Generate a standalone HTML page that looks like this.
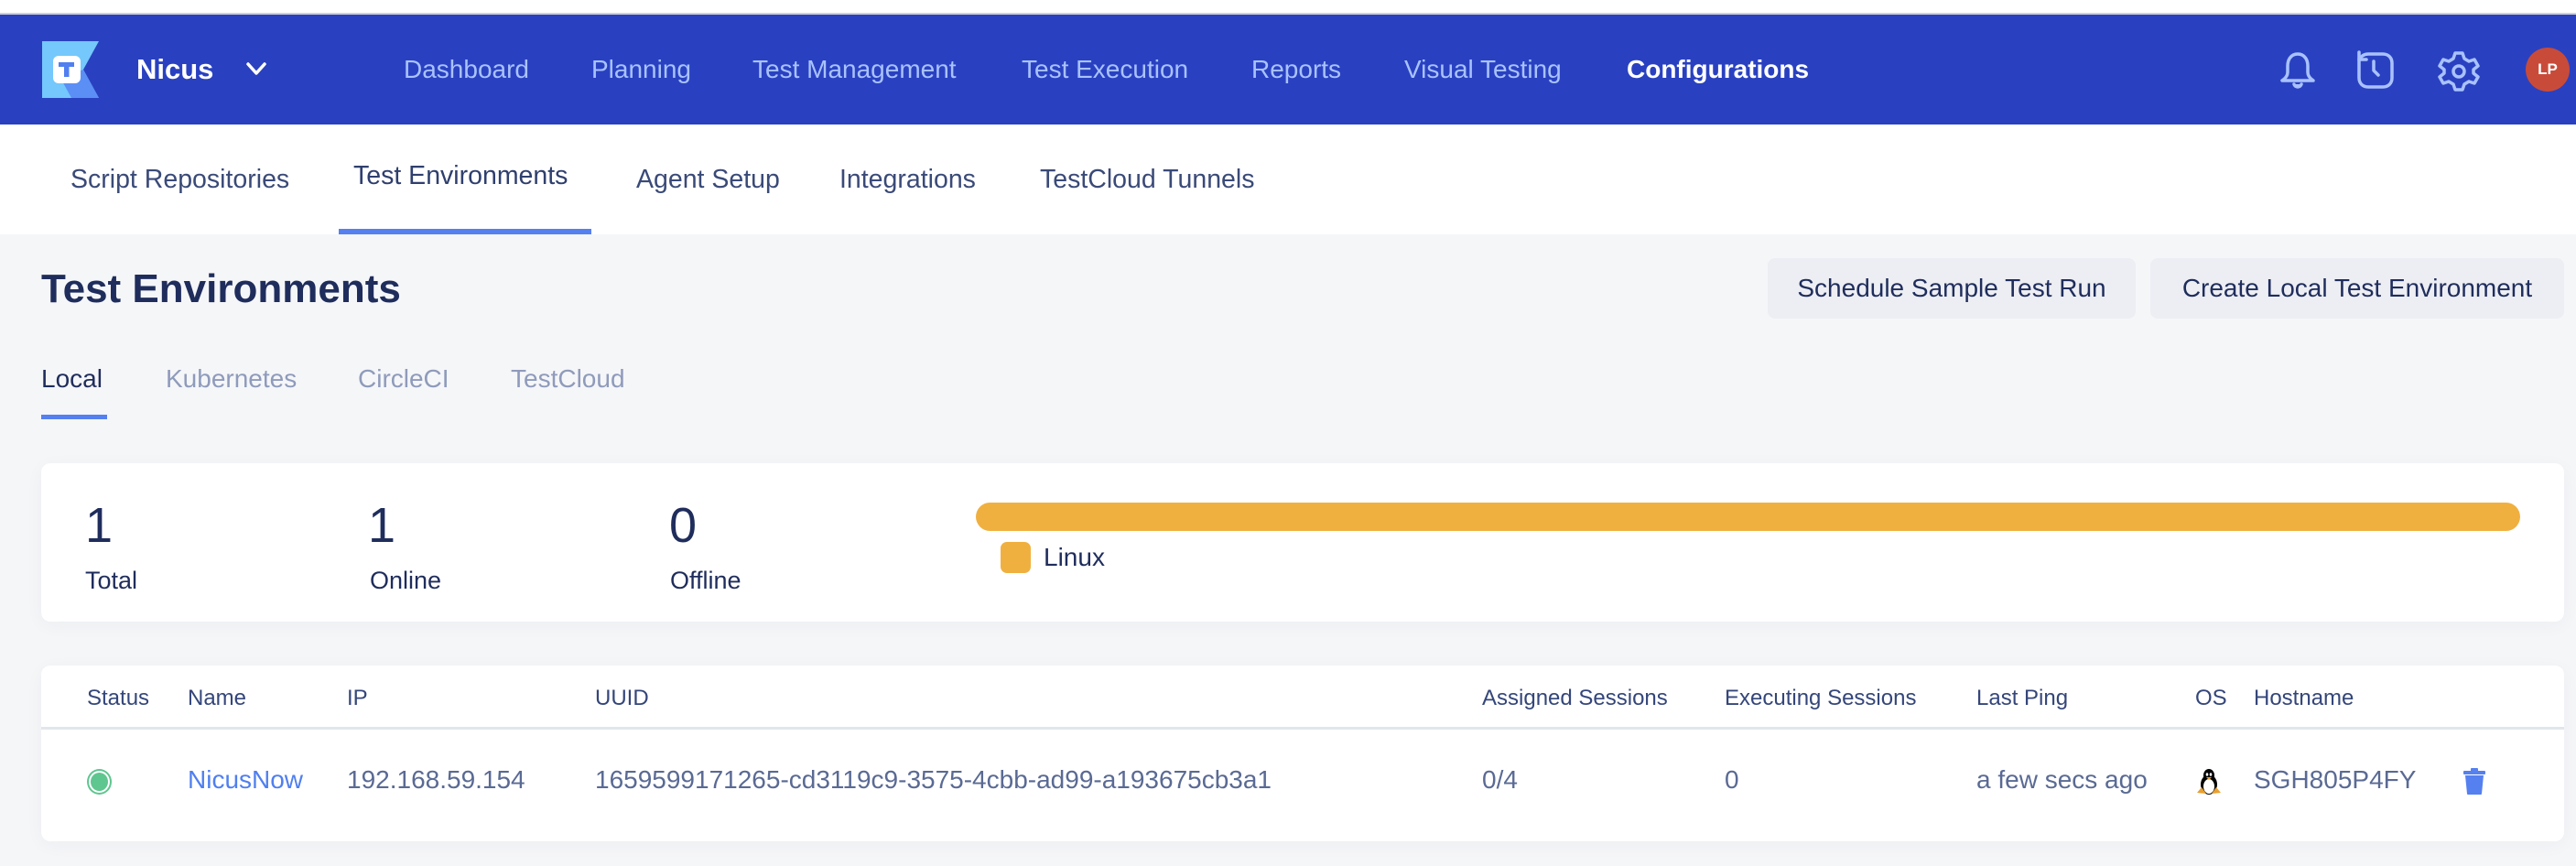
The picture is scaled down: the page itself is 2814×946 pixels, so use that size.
<!DOCTYPE html>
<html><head><meta charset="utf-8">
<style>
*{margin:0;padding:0;box-sizing:border-box}
body{width:2814px;height:946px;background:#f5f6f8;font-family:"Liberation Sans",sans-serif;position:relative;overflow:hidden;color:#1f2d5c}
.a{position:absolute;white-space:nowrap}
.top{left:0;top:0;width:2814px;height:14px;background:#fff}
.line{left:0;top:14px;width:2814px;height:2px;background:#d0d0d4}
.nav{left:0;top:16px;width:2814px;height:120px;background:#2941c0}
.nl{color:#a9c2ff;font-size:28px;top:60px}
.sub{left:0;top:136px;width:2814px;height:120px;background:#fff}
.st{font-size:28.5px;color:#3a4a78;top:180px}
.btn{background:#edeef3;border-radius:8px;height:66px;top:282px;font-size:28px;color:#1f2d5c;display:flex;align-items:center;justify-content:center}
.card{background:#fff;border-radius:10px;left:45px;width:2756px;box-shadow:0 4px 20px rgba(30,40,80,0.04)}
.tab{font-size:28px;color:#8f9bbb;top:398px}
.num{font-size:54px;color:#1f2d5c;top:543px}
.lbl{font-size:27px;color:#1f2d5c;top:619px}
.th{font-size:24px;color:#34467a;top:749px}
.td{font-size:28px;color:#5a6a94;top:836px}
</style></head><body>
<div class="a top"></div><div class="a line"></div>
<div class="a nav"></div>
<svg class="a" style="left:46px;top:45px" width="62" height="62" viewBox="0 0 62 62">
<polygon points="0,0 62,0 45,31 62,62 0,62" fill="#74c8fb"/>
<polygon points="20,40 45,31 62,62 32,62" fill="#5b8ff5"/>
<rect x="12" y="16" width="30" height="30" rx="6" fill="#fff"/>
<rect x="18" y="23" width="17" height="5" fill="#4f7ff0"/><rect x="24" y="23" width="5.5" height="16" fill="#4f7ff0"/>
</svg>
<div class="a" style="left:149px;top:58px;font-size:31px;color:#fff;font-weight:bold">Nicus</div>
<svg class="a" style="left:268px;top:65px" width="24" height="20" viewBox="0 0 24 20"><path d="M3 5 L12 15 L21 5" stroke="#fff" stroke-width="3.5" fill="none" stroke-linecap="round" stroke-linejoin="round"/></svg>
<div class="a nl" style="left:441px">Dashboard</div>
<div class="a nl" style="left:646px">Planning</div>
<div class="a nl" style="left:822px">Test Management</div>
<div class="a nl" style="left:1116px">Test Execution</div>
<div class="a nl" style="left:1367px">Reports</div>
<div class="a nl" style="left:1534px">Visual Testing</div>
<div class="a nl" style="left:1777px;color:#fff;font-weight:bold">Configurations</div>
<svg class="a" style="left:2489px;top:55px" width="42" height="44" viewBox="0 0 42 44" fill="none" stroke="#a9c2ff" stroke-width="3.5" stroke-linecap="round" stroke-linejoin="round"><path d="M21 4 C13 4 10 11 10 17 L10 24 C10 28 7 31 4 33 L38 33 C35 31 32 28 32 24 L32 17 C32 11 29 4 21 4 Z"/><path d="M17 37 C18 41 24 41 25 37" fill="#a9c2ff"/></svg>
<svg class="a" style="left:2573px;top:55px" width="44" height="44" viewBox="0 0 44 44" fill="none" stroke="#a9c2ff" stroke-width="3.5" stroke-linecap="round" stroke-linejoin="round"><path d="M4 10 L4 30 C4 36 8 40 14 40 L30 40 C36 40 40 36 40 30 L40 14 C40 8 36 4 30 4 L14 4 C9 4 6 7 5 9"/><path d="M4 2 L4 10 L12 10"/><path d="M20 12 L20 22 L25 27"/></svg>
<svg class="a" style="left:2662px;top:54px" width="48" height="48" viewBox="0 0 48 48" fill="none" stroke="#a9c2ff" stroke-width="3.5" stroke-linejoin="round"><path d="M20 4 L28 4 L30 10 L35 13 L41 11 L45 18 L40 22 L40 26 L45 30 L41 37 L35 35 L30 38 L28 44 L20 44 L18 38 L13 35 L7 37 L3 30 L8 26 L8 22 L3 18 L7 11 L13 13 L18 10 Z"/><circle cx="24" cy="24" r="6"/></svg>
<div class="a" style="left:2759px;top:52px;width:48px;height:48px;border-radius:50%;background:#c84b3a;color:#fff;font-size:17px;font-weight:bold;display:flex;align-items:center;justify-content:center">LP</div>

<div class="a sub"></div>
<div class="a st" style="left:77px">Script Repositories</div>
<div class="a st" style="left:386px;top:176px;color:#2f3f6e">Test Environments</div>
<div class="a st" style="left:695px">Agent Setup</div>
<div class="a st" style="left:917px">Integrations</div>
<div class="a st" style="left:1136px">TestCloud Tunnels</div>
<div class="a" style="left:370px;top:250px;width:276px;height:6px;background:#5580f0"></div>

<div class="a" style="left:45px;top:291px;font-size:44px;font-weight:bold;color:#1f2d5c">Test Environments</div>
<div class="a btn" style="left:1931px;width:402px">Schedule Sample Test Run</div>
<div class="a btn" style="left:2349px;width:452px">Create Local Test Environment</div>

<div class="a tab" style="left:45px;color:#1f2d5c">Local</div>
<div class="a tab" style="left:181px">Kubernetes</div>
<div class="a tab" style="left:391px">CircleCI</div>
<div class="a tab" style="left:558px">TestCloud</div>
<div class="a" style="left:45px;top:453px;width:72px;height:5px;background:#5580f0"></div>

<div class="a card" style="top:506px;height:173px"></div>
<div class="a num" style="left:93px">1</div><div class="a lbl" style="left:93px">Total</div>
<div class="a num" style="left:402px">1</div><div class="a lbl" style="left:404px">Online</div>
<div class="a num" style="left:731px">0</div><div class="a lbl" style="left:732px">Offline</div>
<div class="a" style="left:1066px;top:549px;width:1687px;height:31px;border-radius:16px;background:#f0b03f"></div>
<div class="a" style="left:1093px;top:592px;width:33px;height:34px;border-radius:7px;background:#f0b03f"></div>
<div class="a" style="left:1140px;top:593px;font-size:28px;color:#1f2d5c">Linux</div>

<div class="a card" style="top:727px;height:192px"></div>
<div class="a" style="left:45px;top:794px;width:2756px;height:3px;background:#e1e5ec"></div>
<div class="a th" style="left:95px">Status</div>
<div class="a th" style="left:205px">Name</div>
<div class="a th" style="left:379px">IP</div>
<div class="a th" style="left:650px">UUID</div>
<div class="a th" style="left:1619px">Assigned Sessions</div>
<div class="a th" style="left:1884px">Executing Sessions</div>
<div class="a th" style="left:2159px">Last Ping</div>
<div class="a th" style="left:2398px">OS</div>
<div class="a th" style="left:2462px">Hostname</div>

<div class="a" style="left:95px;top:840px;width:27px;height:28px;border-radius:50%;border:2.5px solid #5ec68f;background:#fff"><div style="position:absolute;left:2px;top:2px;right:2px;bottom:2px;border-radius:50%;background:#5ec68f"></div></div>
<div class="a td" style="left:205px;color:#4f7ff0">NicusNow</div>
<div class="a td" style="left:379px">192.168.59.154</div>
<div class="a td" style="left:650px">1659599171265-cd3119c9-3575-4cbb-ad99-a193675cb3a1</div>
<div class="a td" style="left:1619px">0/4</div>
<div class="a td" style="left:1884px">0</div>
<div class="a td" style="left:2159px">a few secs ago</div>
<svg class="a" style="left:2400px;top:839px" width="26" height="30" viewBox="0 0 26 30"><ellipse cx="13" cy="18" rx="9" ry="11" fill="#000"/><ellipse cx="13" cy="8" rx="6" ry="7" fill="#000"/><ellipse cx="13" cy="20" rx="6" ry="8" fill="#fff"/><ellipse cx="11" cy="7" rx="1.3" ry="1.8" fill="#fff"/><ellipse cx="15" cy="7" rx="1.3" ry="1.8" fill="#fff"/><path d="M10 10 L16 10 L13 13 Z" fill="#e8a030"/><path d="M0 27 L5 21 L10 28 Z" fill="#e8a030"/><path d="M26 27 L21 21 L16 28 Z" fill="#e8a030"/></svg>
<div class="a td" style="left:2462px">SGH805P4FY</div>
<svg class="a" style="left:2690px;top:839px" width="26" height="30" viewBox="0 0 26 30"><rect x="1" y="3" width="24" height="4" rx="1" fill="#5580f0"/><rect x="9" y="0" width="8" height="4" rx="1" fill="#5580f0"/><path d="M3 8 L23 8 L21 28 Q21 29 20 29 L6 29 Q5 29 5 28 Z" fill="#5580f0"/></svg>
</body></html>
